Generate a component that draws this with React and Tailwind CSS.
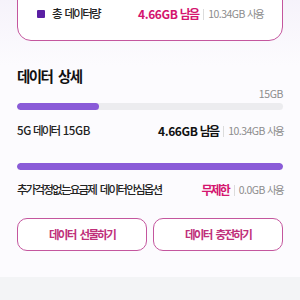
// Data usage detail screen (cropped)
// total card, detail bars, gift / recharge buttons

const font = "font-['Noto_Sans_CJK_KR','Noto_Sans',sans-serif]";

const Used = ({ value }) => (
    <span className="text-[10.5px] text-[#8c8c8c]">
        <span className="tracking-[-0.5px]">{value} </span>
        <span className="tracking-[-1.6px]">사용</span>
    </span>
);

// remaining amount | used amount
const Right = ({ num, unit, numClass, used }) => (
    <div className="flex items-center">
        <span className={`text-[12px] font-bold ${numClass}`}>
            {num && <span className="tracking-[-0.4px]">{num} </span>}
            <span className="tracking-[-1.9px]">{unit}</span>
        </span>
        <span className="ml-[5px] mr-[4px] w-px h-[11px] bg-[#dcdcdc]" />
        <Used value={used} />
    </div>
);

const Bar = ({ percent }) => (
    <div className="h-[7px] rounded-full bg-[#ececef] overflow-hidden">
        <div className="h-full rounded-full bg-[#8a5bd8]" style={{ width: `${percent}%` }} />
    </div>
);

const btn = "h-[33px] rounded-[10px] border-[1.5px] border-[#c4569e] bg-white text-[11.5px] font-bold text-[#c0307a] tracking-[-1.7px] [word-spacing:3px]";

export default function App() {
    return (
        <div className={`w-[300px] h-[300px] overflow-hidden bg-white ${font}`}>
            {/* total data card */}
            <div className="bg-gradient-to-b from-[#f3eff9] to-[#fcfbfe] px-[17px] pb-[24px]">
                <div className="-mt-[30px] pt-[34px] pb-[17px] px-[19px] bg-white border-[1.5px] border-[#c4569e] rounded-[14px]">
                    <div className="flex items-center justify-between h-[18px]">
                        <div className="flex items-center gap-[7px]">
                            <span className="w-[8px] h-[8px] rounded-[1px] bg-[#5a1fa3]" />
                            <span className="text-[11.5px] font-medium text-[#222] tracking-[-1.8px] [word-spacing:3px]">총 데이터량</span>
                        </div>
                        <Right num="4.66GB" unit="남음" numClass="text-[#d4156f]" used="10.34GB" />
                    </div>
                </div>
            </div>

            {/* detail */}
            <div className="px-[17px] bg-[#fcfbfe]">
                <h2 className="text-[14.5px] leading-[22px] font-bold text-[#111] tracking-[-1.6px] [word-spacing:4px]">데이터 상세</h2>
                <div className="text-right text-[10.5px] leading-[13px] text-[#8c8c8c] tracking-[-0.4px]">15GB</div>
                <div className="mt-[3px]">
                    <Bar percent={31} />
                </div>
                <div className="mt-[12px] flex items-center justify-between h-[18px]">
                    <span className="text-[11.5px] font-medium text-[#222]">
                        <span className="tracking-[-0.4px]">5G </span>
                        <span className="tracking-[-1.8px] [word-spacing:2.5px]">데이터 </span>
                        <span className="tracking-[-0.4px]">15GB</span>
                    </span>
                    <Right num="4.66GB" unit="남음" numClass="text-[#111]" used="10.34GB" />
                </div>

                <div className="mt-[23px]">
                    <Bar percent={100} />
                </div>
                <div className="mt-[11px] flex items-center justify-between h-[18px]">
                    <span className="text-[11.5px] font-medium text-[#222] tracking-[-1.8px] [word-spacing:3px]">추가걱정없는요금제 데이터안심옵션</span>
                    <Right unit="무제한" numClass="text-[#d4156f]" used="0.0GB" />
                </div>

                <div className="mt-[19px] grid grid-cols-2 gap-[6px]">
                    <button className={btn}>데이터 선물하기</button>
                    <button className={btn}>데이터 충전하기</button>
                </div>
                <div className="h-[26px]" />
            </div>
            <div className="h-[30px] bg-[#f3f4f6]" />
        </div>
    );
}
